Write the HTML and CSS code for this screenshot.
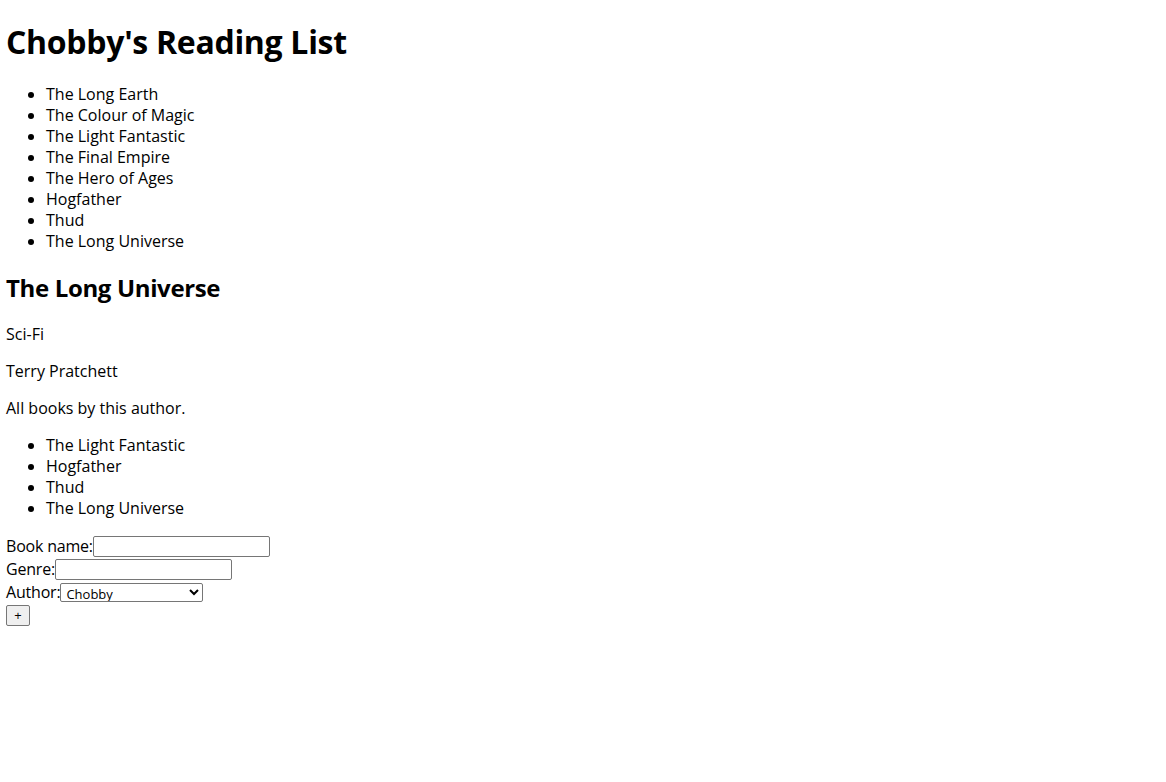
FILE: index.html
```html
<!DOCTYPE html>
<html lang="en">
<head>
<meta charset="utf-8">
<title>Chobby's Reading List</title>
<link rel="stylesheet" href="styles.css">
</head>
<body>
<div class="app">
  <h1 class="title">Chobby's Reading List</h1>
  <ul class="book-list">
    <li>The Long Earth</li>
    <li>The Colour of Magic</li>
    <li>The Light Fantastic</li>
    <li>The Final Empire</li>
    <li>The Hero of Ages</li>
    <li>Hogfather</li>
    <li>Thud</li>
    <li>The Long Universe</li>
  </ul>
  <div class="details">
    <h2 class="details-title">The Long Universe</h2>
    <p class="para">Sci-Fi</p>
    <p class="para">Terry Pratchett</p>
    <p class="para">All books by this author.</p>
    <ul class="book-list">
      <li>The Light Fantastic</li>
      <li>Hogfather</li>
      <li>Thud</li>
      <li>The Long Universe</li>
    </ul>
  </div>
  <form class="add-form">
    <div class="field"><label class="label">Book name:</label><input class="text-input" type="text"></div>
    <div class="field"><label class="label">Genre:</label><input class="text-input" type="text"></div>
    <div class="field"><label class="label">Author:</label><select class="select"><option>Chobby</option></select></div>
    <div class="field"><button class="add-btn" type="button">+</button></div>
  </form>
</div>
</body>
</html>
```
FILE: styles.css
```css
html, body {
  background: #fff;
}
body {
  margin: 0;
  padding: 0 6px;
  font-family: "Open Sans", "Noto Sans CJK KR", sans-serif;
  font-size: 16px;
  line-height: 21px;
  color: #000;
}
.title {
  font-size: 32px;
  line-height: 43px;
  font-weight: 700;
  letter-spacing: -0.3px;
  margin: 20px 0 21px;
}
.book-list {
  margin: 16px 0;
  padding-left: 40px;
  list-style: disc;
}
.details-title {
  font-size: 24px;
  line-height: 32px;
  font-weight: 700;
  letter-spacing: -0.35px;
  margin: 20px 0;
}
.para {
  margin: 16px 0;
}
.label {
  letter-spacing: -0.2px;
}
.add-form {
  display: flex;
  flex-direction: column;
}
.field {
  display: flex;
  align-items: center;
  height: 23px;
}
.text-input {
  box-sizing: border-box;
  width: 177px;
  height: 21px;
  margin: 0;
  border: 1px solid #767676;
  border-radius: 2px;
  font-size: 13px;
  padding: 1px 2px;
}
.select {
  box-sizing: border-box;
  width: 143px;
  height: 19px;
  margin: 0;
  border: 1px solid #767676;
  border-radius: 2px;
  font-size: 13px;
  line-height: 15px;
  font-family: "Open Sans", sans-serif;
  padding: 0 1px;
  background: #fff;
}
.add-btn {
  box-sizing: border-box;
  width: 24px;
  height: 21px;
  margin: 0;
  padding: 0;
  border: 1px solid #767676;
  border-radius: 2px;
  background: #efefef;
  font-size: 13px;
  font-family: "Open Sans", sans-serif;
  line-height: 1;
}
```
